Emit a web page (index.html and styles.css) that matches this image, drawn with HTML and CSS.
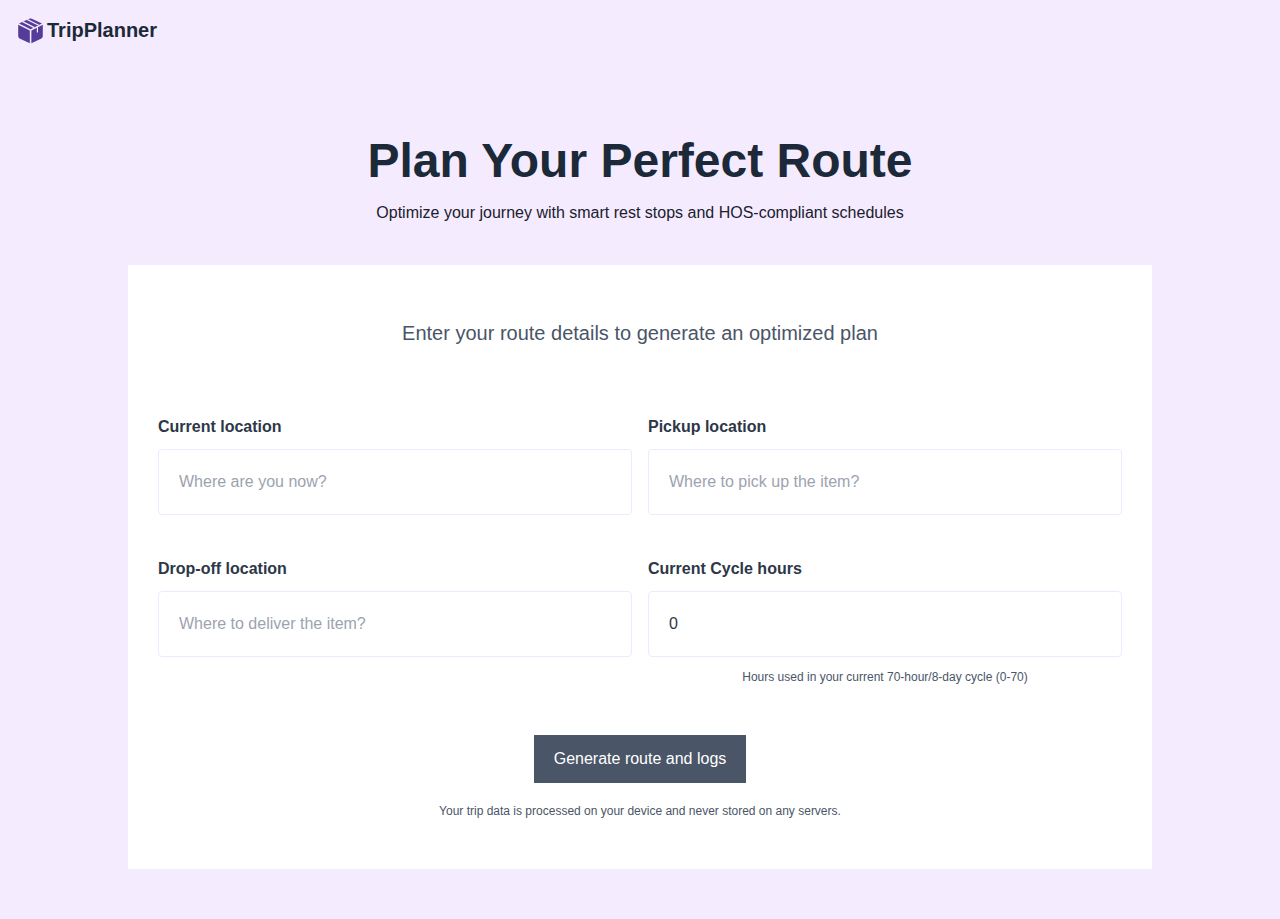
FILE: index.html
```html
<!DOCTYPE html>
<html lang="en">
<head>
<meta charset="utf-8">
<title>TripPlanner</title>
<link rel="stylesheet" href="styles.css">
</head>
<body>
<header class="topbar">
  <svg class="logo" viewBox="0 0 29 29" aria-hidden="true">
    <path class="logo-face" d="M14.5 2.4Q15.1 2.4 15.8 2.7L26 7.6 14.6 13.2 3 7.6 13.2 2.7Q13.9 2.4 14.5 2.4Z"/>
    <path class="logo-face" d="M2.2 8.8 13.8 14.4V27.2L4.1 22.8Q2.2 21.9 2.2 19.9Z"/>
    <path class="logo-face" d="M26.8 8.8 15.4 14.4V27.2L24.9 22.8Q26.8 21.9 26.8 19.9Z"/>
    <path class="logo-line" d="M11 3.4 22.8 9.2M6.6 5.6 18.4 11.6"/>
    <path class="logo-line" d="M21.4 10.8V16.4"/>
  </svg>
  <span class="brand">TripPlanner</span>
</header>
<main class="page">
  <section class="hero">
    <h1 class="title">Plan Your Perfect Route</h1>
    <p class="subtitle">Optimize your journey with smart rest stops and HOS-compliant schedules</p>
  </section>
  <form class="card">
    <p class="intro">Enter your route details to generate an optimized plan</p>
    <div class="fields">
      <div class="field">
        <label class="label" for="current">Current location</label>
        <input class="input" id="current" type="text" placeholder="Where are you now?">
      </div>
      <div class="field">
        <label class="label" for="pickup">Pickup location</label>
        <input class="input" id="pickup" type="text" placeholder="Where to pick up the item?">
      </div>
      <div class="field">
        <label class="label" for="dropoff">Drop-off location</label>
        <input class="input" id="dropoff" type="text" placeholder="Where to deliver the item?">
      </div>
      <div class="field">
        <label class="label" for="hours">Current Cycle hours</label>
        <input class="input" id="hours" type="number" min="0" max="70" value="0">
        <p class="hint">Hours used in your current 70-hour/8-day cycle (0-70)</p>
      </div>
    </div>
    <button class="submit" type="button">Generate route and logs</button>
    <p class="privacy">Your trip data is processed on your device and never stored on any servers.</p>
  </form>
</main>
</body>
</html>
```
FILE: styles.css
```css
* {
  box-sizing: border-box;
}

body {
  margin: 0;
  background: #f4ebfe;
  color: #1a202c;
  font-family: "Liberation Sans", Arial, sans-serif;
  font-size: 16px;
  line-height: 24px;
}

h1,
p {
  margin: 0;
}

.topbar {
  display: flex;
  align-items: flex-start;
  gap: 2px;
  padding: 16px;
}

.logo {
  width: 29px;
  height: 29px;
}

.logo-face {
  fill: #553c9a;
}

.logo-line {
  fill: none;
  stroke: #f4ebfe;
  stroke-width: 1.2;
}

.brand {
  color: #1c2938;
  font-size: 20px;
  font-weight: 700;
  line-height: 28px;
}

.page {
  width: 80%;
  margin: 0 auto;
  padding: 64px 0 50px;
  text-align: center;
}

.title {
  margin-bottom: 4px;
  color: #1c2938;
  font-size: 48px;
  line-height: 72px;
}

.hero {
  margin-bottom: 40px;
}

.card {
  padding: 52px 30px 50px;
  background: #fff;
}

.intro {
  margin-bottom: 66px;
  color: #4a5568;
  font-size: 20px;
  line-height: 32px;
}

.fields {
  display: grid;
  grid-template-columns: 1fr 1fr;
  gap: 42px 16px;
  margin-bottom: 50px;
}

.field {
  display: flex;
  flex-direction: column;
}

.label {
  margin-bottom: 10px;
  color: #2d3748;
  font-weight: 700;
  text-align: left;
}

.input {
  width: 100%;
  height: 66px;
  padding: 20px;
  border: 1px solid #f0e9fd;
  border-radius: 4px;
  background: #fff;
  color: #2d3748;
  font: inherit;
}

.input::placeholder {
  color: #9ca3af;
}

.hint,
.privacy {
  color: #4a5568;
  font-size: 12px;
  line-height: 16px;
}

.hint {
  margin-top: 12px;
}

.submit {
  height: 48px;
  padding: 0 20px;
  border: 0;
  background: #4a5567;
  color: #fff;
  font: inherit;
}

.privacy {
  margin-top: 20px;
}
```
